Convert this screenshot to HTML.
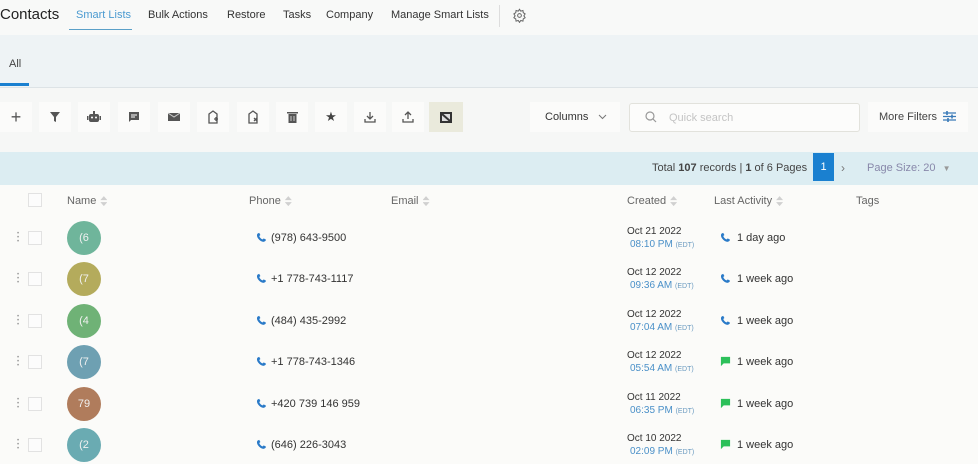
<!DOCTYPE html>
<html><head><meta charset="utf-8"><style>
*{margin:0;padding:0;box-sizing:border-box}
body{width:978px;height:464px;overflow:hidden;background:#f6f7f6;font-family:"Liberation Sans",sans-serif;color:#333;position:relative;font-size:11px}
.a{position:absolute;white-space:nowrap}
.tab{top:9px;font-size:11px;color:#333}
.btn{position:absolute;top:102px;width:32px;height:30px;background:#fbfbfa;display:flex;align-items:center;justify-content:center}
.av{position:absolute;left:67px;width:34px;height:34px;border-radius:50%;color:#f0f0f0;font-size:11px;display:flex;align-items:center;justify-content:center}
.cb{position:absolute;left:28px;width:14px;height:14px;border:1px solid #e2e2e2;background:#fcfcfc}
.dots{position:absolute;left:17px;width:3px;color:#999;font-size:6px;line-height:4px}
.ph{position:absolute;left:256px;font-size:11px;color:#333}
.ph svg{position:absolute;left:0;top:0}
.dt{position:absolute;left:627px;font-size:10px;color:#333}
.dt span{display:block;color:#4a90c8;margin-left:3px;margin-top:2px}
.dt small{font-size:7px;color:#6a9ac0}
.la{position:absolute;left:720px;font-size:11px;color:#333}
.la svg{position:absolute;left:0;top:0}
.la span{margin-left:17px}
.sort{display:inline-block;width:7px;height:10px;vertical-align:middle;margin-left:4px;background:#d0d0d0;clip-path:polygon(50% 0,100% 40%,0 40%,0 60%,100% 60%,50% 100%,0 60%,0 40%)}
</style></head><body>
<div class="a" style="left:0;top:0;width:978px;height:35px;background:#f8f9f8"></div>
<div class="a" style="left:0;top:6px;font-size:15px;color:#222">Contacts</div>
<div class="a tab" style="left:76px;color:#4a9ad0">Smart Lists</div>
<div class="a" style="left:69px;top:29px;width:63px;height:1px;background:#5aa0c8"></div>
<div class="a tab" style="left:148px">Bulk Actions</div>
<div class="a tab" style="left:227px">Restore</div>
<div class="a tab" style="left:283px">Tasks</div>
<div class="a tab" style="left:326px">Company</div>
<div class="a tab" style="left:391px">Manage Smart Lists</div>
<div class="a" style="left:499px;top:5px;width:1px;height:22px;background:#ddd"></div>
<svg class="a" style="left:512px;top:8px" width="15" height="15" viewBox="0 0 24 24" fill="none" stroke="#666" stroke-width="1.6"><circle cx="12" cy="12" r="3"/><path d="M12 2l2 3 3.5-1 .5 3.5 3 2-2 3 2 3-3 2-.5 3.5-3.5-1-2 3-2-3-3.5 1-.5-3.5-3-2 2-3-2-3 3-2 .5-3.5 3.5 1z"/></svg>
<div class="a" style="left:0;top:35px;width:978px;height:53px;background:#eef3f5"></div>
<div class="a" style="left:9px;top:58px;font-size:11px;color:#444">All</div>
<div class="a" style="left:0;top:83px;width:29px;height:3px;background:#1a80d0"></div>
<div class="a" style="left:0;top:87px;width:978px;height:1px;background:#dde3e6"></div>
<div class="btn" style="left:0"><span style="font-size:18px;color:#555;font-weight:300">+</span></div>
<div class="btn" style="left:39px"><svg width="12" height="12" viewBox="0 0 12 12"><path d="M1 1h10L7 6v5L5 10V6z" fill="#555"/></svg></div>
<div class="btn" style="left:78px"><svg width="14" height="12" viewBox="0 0 14 12"><rect x="2" y="3" width="10" height="8" rx="2" fill="#555"/><rect x="6" y="0" width="2" height="3" fill="#555"/><rect x="0" y="5" width="1.5" height="4" fill="#555"/><rect x="12.5" y="5" width="1.5" height="4" fill="#555"/><circle cx="5" cy="6.5" r="1" fill="#fff"/><circle cx="9" cy="6.5" r="1" fill="#fff"/></svg></div>
<div class="btn" style="left:118px"><svg width="12" height="12" viewBox="0 0 12 12"><path d="M1 1h10v8H3l-2 2z" fill="#555"/><path d="M3 4h6M3 6h4" stroke="#fff"/></svg></div>
<div class="btn" style="left:158px"><svg width="12" height="10" viewBox="0 0 12 10"><rect y="1" width="12" height="8" fill="#555"/><path d="M0 1l6 4 6-4" stroke="#ccc" fill="none"/></svg></div>
<div class="btn" style="left:197px"><svg width="12" height="14" viewBox="0 0 12 14" fill="none" stroke="#555" stroke-width="1.3"><path d="M2 4l4-3 4 3v9H2z"/><path d="M7 9h4M9 7v4"/></svg></div>
<div class="btn" style="left:237px"><svg width="12" height="14" viewBox="0 0 12 14" fill="none" stroke="#555" stroke-width="1.3"><path d="M2 4l4-3 4 3v9H2z"/><path d="M7 8l3 3M10 8l-3 3"/></svg></div>
<div class="btn" style="left:276px"><svg width="11" height="12" viewBox="0 0 11 12"><rect x="0" y="1" width="11" height="1.5" fill="#555"/><rect x="1.5" y="3" width="8" height="9" fill="#555"/><path d="M4 5v5M7 5v5" stroke="#ccc"/></svg></div>
<div class="btn" style="left:315px"><span style="color:#444;font-size:13px">★</span></div>
<div class="btn" style="left:354px"><svg width="12" height="12" viewBox="0 0 12 12" fill="none" stroke="#555" stroke-width="1.3"><path d="M6 1v6M3 5l3 3 3-3M1 8v3h10V8"/></svg></div>
<div class="btn" style="left:392px"><svg width="12" height="12" viewBox="0 0 12 12" fill="none" stroke="#555" stroke-width="1.3"><path d="M6 8V2M3 4l3-3 3 3M1 8v3h10V8"/></svg></div>
<div class="btn" style="left:429px;width:34px;background:#eaeadc"><svg width="12" height="11" viewBox="0 0 12 11"><rect width="12" height="11" fill="#333"/><rect x="2" y="2" width="8" height="7" fill="#ddd"/><path d="M2 2l8 7" stroke="#333" stroke-width="2"/></svg></div>
<div class="a" style="left:530px;top:102px;width:90px;height:30px;background:#fbfbfa"></div>
<div class="a" style="left:545px;top:111px;font-size:11px;color:#333">Columns</div>
<svg class="a" style="left:598px;top:114px" width="9" height="6" viewBox="0 0 9 6"><path d="M1 1l3.5 3.5L8 1" stroke="#777" fill="none"/></svg>
<div class="a" style="left:629px;top:103px;width:231px;height:29px;background:#fcfcfb;border:1px solid #e2e2dc;border-radius:3px"></div>
<svg class="a" style="left:645px;top:111px" width="12" height="12" viewBox="0 0 12 12" fill="none" stroke="#999" stroke-width="1.2"><circle cx="5" cy="5" r="4"/><path d="M8 8l3 3"/></svg>
<div class="a" style="left:669px;top:112px;font-size:11px;color:#c4c4c4">Quick search</div>
<div class="a" style="left:868px;top:102px;width:100px;height:30px;background:#fbfbfa"></div>
<div class="a" style="left:879px;top:111px;font-size:11px;color:#444">More Filters</div>
<svg class="a" style="left:943px;top:111px" width="13" height="11" viewBox="0 0 13 11" stroke="#3a7ab8" stroke-width="1.3"><path d="M0 2h13M0 5.5h13M0 9h13"/><path d="M4 0v4M9 3.5v4M5 7v4" stroke-width="1.6"/></svg>
<div class="a" style="left:0;top:152px;width:978px;height:33px;background:#dcedf2"></div>
<div class="a" style="left:652px;top:162px;font-size:11px;color:#444">Total <b>107</b> records | <b>1</b> of 6 Pages</div>
<div class="a" style="left:813px;top:153px;width:21px;height:28px;background:#1a80d0;color:#fff;font-size:11px;text-align:center;line-height:28px">1</div>
<div class="a" style="left:841px;top:161px;font-size:12px;color:#777">›</div>
<div class="a" style="left:867px;top:162px;font-size:11px;color:#88a;">Page Size: 20 <span style="font-size:8px;color:#999;margin-left:4px">▼</span></div>
<div class="a" style="left:0;top:185px;width:978px;height:279px;background:#fbfbf9"></div>
<div class="cb" style="top:193px"></div>
<div class="a" style="left:67px;top:195px;font-size:11px;color:#666">Name<span class="sort"></span></div>
<div class="a" style="left:249px;top:195px;font-size:11px;color:#666">Phone<span class="sort"></span></div>
<div class="a" style="left:391px;top:195px;font-size:11px;color:#666">Email<span class="sort"></span></div>
<div class="a" style="left:627px;top:195px;font-size:11px;color:#666">Created<span class="sort"></span></div>
<div class="a" style="left:714px;top:195px;font-size:11px;color:#666">Last Activity<span class="sort"></span></div>
<div class="a" style="left:856px;top:195px;font-size:11px;color:#666">Tags</div>

<div class="dots" style="top:232px">•<br>•<br>•</div><div class="cb" style="top:231px"></div>
<div class="av" style="top:221px;background:#6fb59b">(6</div>
<div class="ph" style="top:232px"><svg width="11" height="11" viewBox="0 0 12 12"><path d="M11 8.5c-1 3-4.5 3-7.5 0S0 1.5 3.5 1l1.3 2.3-1.2 1c.3 1.5 2.2 3.5 3.8 3.8l1-1.2z" fill="#2a7ac8"/></svg><span style="margin-left:15px">(978) 643-9500</span></div>
<div class="dt" style="top:226px">Oct 21 2022<span>08:10 PM <small>(EDT)</small></span></div>
<div class="la" style="top:232px"><svg width="11" height="11" viewBox="0 0 12 12"><path d="M11 8.5c-1 3-4.5 3-7.5 0S0 1.5 3.5 1l1.3 2.3-1.2 1c.3 1.5 2.2 3.5 3.8 3.8l1-1.2z" fill="#2a7ac8"/></svg><span>1 day ago</span></div>

<div class="dots" style="top:273px">•<br>•<br>•</div><div class="cb" style="top:272px"></div>
<div class="av" style="top:262px;background:#b4ab5c">(7</div>
<div class="ph" style="top:273px"><svg width="11" height="11" viewBox="0 0 12 12"><path d="M11 8.5c-1 3-4.5 3-7.5 0S0 1.5 3.5 1l1.3 2.3-1.2 1c.3 1.5 2.2 3.5 3.8 3.8l1-1.2z" fill="#2a7ac8"/></svg><span style="margin-left:15px">+1 778-743-1117</span></div>
<div class="dt" style="top:267px">Oct 12 2022<span>09:36 AM <small>(EDT)</small></span></div>
<div class="la" style="top:273px"><svg width="11" height="11" viewBox="0 0 12 12"><path d="M11 8.5c-1 3-4.5 3-7.5 0S0 1.5 3.5 1l1.3 2.3-1.2 1c.3 1.5 2.2 3.5 3.8 3.8l1-1.2z" fill="#2a7ac8"/></svg><span>1 week ago</span></div>

<div class="dots" style="top:315px">•<br>•<br>•</div><div class="cb" style="top:314px"></div>
<div class="av" style="top:304px;background:#6fb276">(4</div>
<div class="ph" style="top:315px"><svg width="11" height="11" viewBox="0 0 12 12"><path d="M11 8.5c-1 3-4.5 3-7.5 0S0 1.5 3.5 1l1.3 2.3-1.2 1c.3 1.5 2.2 3.5 3.8 3.8l1-1.2z" fill="#2a7ac8"/></svg><span style="margin-left:15px">(484) 435-2992</span></div>
<div class="dt" style="top:309px">Oct 12 2022<span>07:04 AM <small>(EDT)</small></span></div>
<div class="la" style="top:315px"><svg width="11" height="11" viewBox="0 0 12 12"><path d="M11 8.5c-1 3-4.5 3-7.5 0S0 1.5 3.5 1l1.3 2.3-1.2 1c.3 1.5 2.2 3.5 3.8 3.8l1-1.2z" fill="#2a7ac8"/></svg><span>1 week ago</span></div>

<div class="dots" style="top:356px">•<br>•<br>•</div><div class="cb" style="top:355px"></div>
<div class="av" style="top:345px;background:#6ea0b2">(7</div>
<div class="ph" style="top:356px"><svg width="11" height="11" viewBox="0 0 12 12"><path d="M11 8.5c-1 3-4.5 3-7.5 0S0 1.5 3.5 1l1.3 2.3-1.2 1c.3 1.5 2.2 3.5 3.8 3.8l1-1.2z" fill="#2a7ac8"/></svg><span style="margin-left:15px">+1 778-743-1346</span></div>
<div class="dt" style="top:350px">Oct 12 2022<span>05:54 AM <small>(EDT)</small></span></div>
<div class="la" style="top:356px"><svg width="11" height="11" viewBox="0 0 12 12"><path d="M1 1h10v7H4l-3 3z" fill="#2cc05a"/></svg><span>1 week ago</span></div>

<div class="dots" style="top:398px">•<br>•<br>•</div><div class="cb" style="top:397px"></div>
<div class="av" style="top:387px;background:#b07c5c">79</div>
<div class="ph" style="top:398px"><svg width="11" height="11" viewBox="0 0 12 12"><path d="M11 8.5c-1 3-4.5 3-7.5 0S0 1.5 3.5 1l1.3 2.3-1.2 1c.3 1.5 2.2 3.5 3.8 3.8l1-1.2z" fill="#2a7ac8"/></svg><span style="margin-left:15px">+420 739 146 959</span></div>
<div class="dt" style="top:392px">Oct 11 2022<span>06:35 PM <small>(EDT)</small></span></div>
<div class="la" style="top:398px"><svg width="11" height="11" viewBox="0 0 12 12"><path d="M1 1h10v7H4l-3 3z" fill="#2cc05a"/></svg><span>1 week ago</span></div>

<div class="dots" style="top:439px">•<br>•<br>•</div><div class="cb" style="top:438px"></div>
<div class="av" style="top:428px;background:#6aabb2">(2</div>
<div class="ph" style="top:439px"><svg width="11" height="11" viewBox="0 0 12 12"><path d="M11 8.5c-1 3-4.5 3-7.5 0S0 1.5 3.5 1l1.3 2.3-1.2 1c.3 1.5 2.2 3.5 3.8 3.8l1-1.2z" fill="#2a7ac8"/></svg><span style="margin-left:15px">(646) 226-3043</span></div>
<div class="dt" style="top:433px">Oct 10 2022<span>02:09 PM <small>(EDT)</small></span></div>
<div class="la" style="top:439px"><svg width="11" height="11" viewBox="0 0 12 12"><path d="M1 1h10v7H4l-3 3z" fill="#2cc05a"/></svg><span>1 week ago</span></div>
</body></html>
